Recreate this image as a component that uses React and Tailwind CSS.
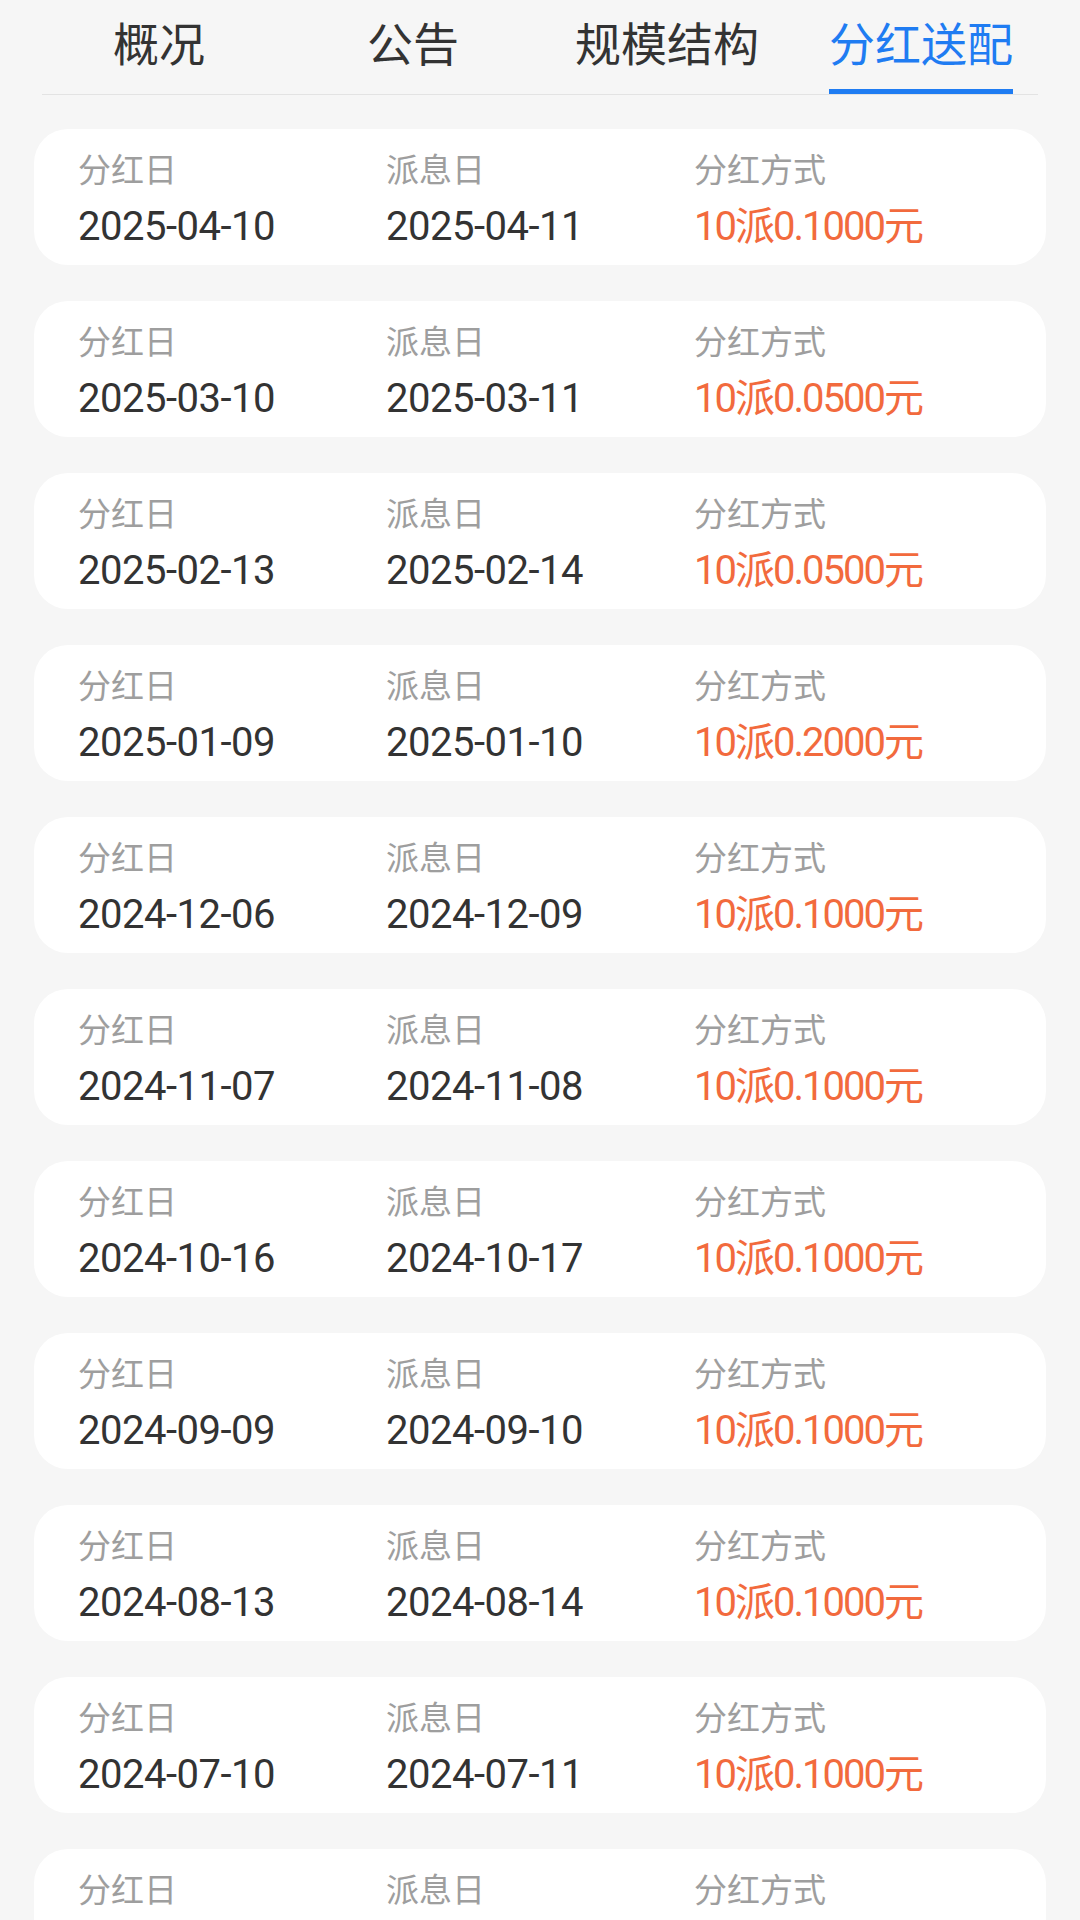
import React from "react";

const tabs = ["概况", "公告", "规模结构", "分红送配"];

const rows = [
  ["2025-04-10", "2025-04-11", "10派0.1000元"],
  ["2025-03-10", "2025-03-11", "10派0.0500元"],
  ["2025-02-13", "2025-02-14", "10派0.0500元"],
  ["2025-01-09", "2025-01-10", "10派0.2000元"],
  ["2024-12-06", "2024-12-09", "10派0.1000元"],
  ["2024-11-07", "2024-11-08", "10派0.1000元"],
  ["2024-10-16", "2024-10-17", "10派0.1000元"],
  ["2024-09-09", "2024-09-10", "10派0.1000元"],
  ["2024-08-13", "2024-08-14", "10派0.1000元"],
  ["2024-07-10", "2024-07-11", "10派0.1000元"],
  ["2024-06-12", "2024-06-13", "10派0.1000元"],
];

const cjk = "font-['Noto_Sans_CJK_SC',sans-serif]";
const num = "font-['Roboto','Noto_Sans_CJK_SC',sans-serif]";

function Cell({ label, value, accent }) {
  return (
    <div className="flex flex-col">
      <div className={`${cjk} text-[33px] leading-[40px] text-[#9e9e9e]`}>{label}</div>
      <div
        className={`${num} mt-[15px] text-[40px] leading-[48px] whitespace-nowrap ${
          accent ? "text-[#f26a3d] tracking-[-2px]" : "text-[#333333] tracking-[-0.5px]"
        }`}
      >
        {value}
      </div>
    </div>
  );
}

export default function App() {
  return (
    <div className="min-h-[1920px] w-[1080px] bg-[#f6f6f6] pb-10">
      <div className="grid grid-cols-4 px-[32px] pt-[13px]">
        {tabs.map((t, i) => (
          <div key={t} className="flex flex-col items-center">
            <div
              className={`${cjk} text-[46px] leading-[56px] ${
                i === 3 ? "text-[#1f7cf2]" : "text-[#333333]"
              }`}
            >
              {t}
            </div>
            <div className={`mt-[20px] h-[5px] w-[184px] ${i === 3 ? "bg-[#1f7cf2]" : "bg-transparent"}`} />
          </div>
        ))}
      </div>
      <div className="mx-[42px] h-px bg-[#e3e3e3]" />
      <div className="mx-[34px] mt-[34px] flex flex-col gap-[36px]">
        {rows.map((r, i) => (
          <div
            key={i}
            className="grid h-[136px] grid-cols-3 rounded-[34px] bg-white px-[44px] pt-[19px]"
          >
            <Cell label="分红日" value={r[0]} />
            <Cell label="派息日" value={r[1]} />
            <Cell label="分红方式" value={r[2]} accent />
          </div>
        ))}
      </div>
    </div>
  );
}
